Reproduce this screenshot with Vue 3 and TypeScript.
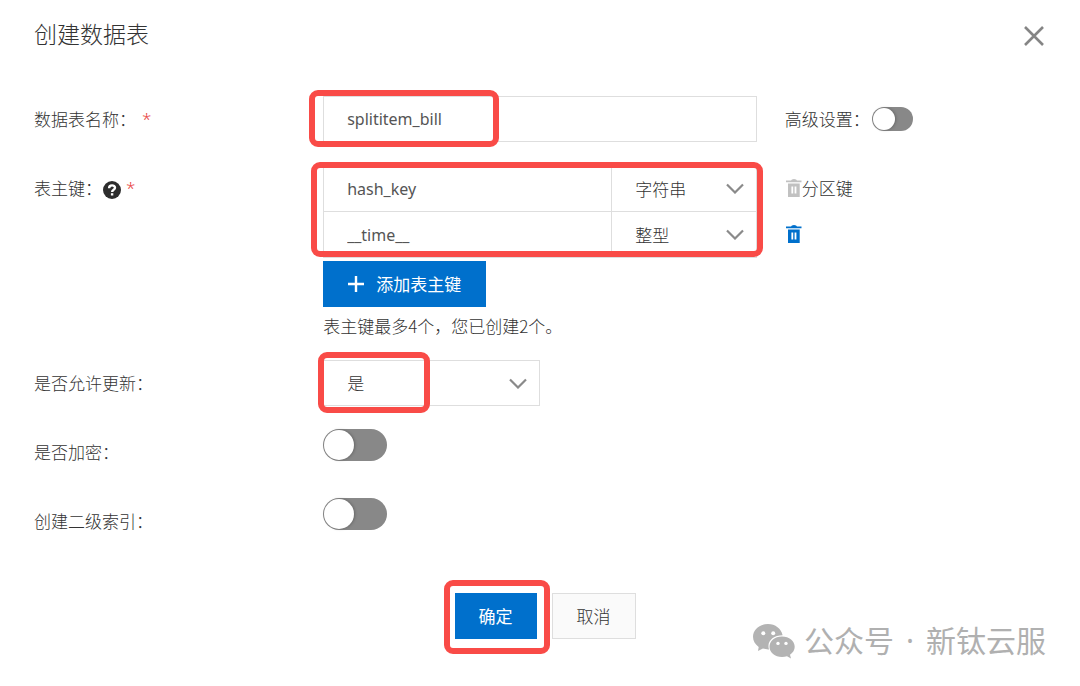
<script setup lang="ts">
import { ref } from 'vue'

interface KeyRow {
  name: string
  type: string
  locked: boolean
}

const tableName = ref('splititem_bill')
const keys = ref<KeyRow[]>([
  { name: 'hash_key', type: '字符串', locked: true },
  { name: '__time__', type: '整型', locked: false },
])
const allowUpdate = ref('是')
const advanced = ref(false)
const encrypted = ref(false)
const secondaryIndex = ref(false)

function addKey() {
  if (keys.value.length < 4) keys.value.push({ name: '', type: '字符串', locked: false })
}
function removeKey(index: number) {
  keys.value.splice(index, 1)
}
</script>

<template>
  <main class="dialog">
    <header class="header">
      <h1>创建数据表</h1>
      <button class="close" type="button" aria-label="关闭">
        <svg width="20" height="20" viewBox="0 0 20 20"><path d="M1 1L19 19M19 1L1 19" fill="none" stroke="#858585" stroke-width="2.6" /></svg>
      </button>
    </header>

    <form class="form" @submit.prevent>
      <div class="row">
        <label class="label" for="table-name">数据表名称：<span class="star spaced">*</span></label>
        <div class="control">
          <input id="table-name" v-model="tableName" class="box" type="text" />
          <span class="mark mark-name"></span>
        </div>
        <div class="aside">
          <label for="advanced">高级设置：</label>
          <input id="advanced" v-model="advanced" class="toggle small" type="checkbox" />
        </div>
      </div>

      <div class="row">
        <div class="label">
          <span>表主键：</span>
          <svg class="help" width="18" height="18" viewBox="0 0 18 18">
            <circle cx="9" cy="9" r="9" fill="#2d2d2d" />
            <path d="M6.100 7.200C6.100 3.500 12 3.600 12 6.800C12 8.900 9.100 8.600 9.100 11" fill="none" stroke="#fff" stroke-width="2.4" />
            <path d="M7.900 12.200h2.400v2.300H7.900z" fill="#fff" />
          </svg>
          <span class="star">*</span>
        </div>
        <div class="control keys">
          <div v-for="(key, i) in keys" :key="i" class="key">
            <input v-model="key.name" class="box" type="text" :aria-label="'主键名称' + (i + 1)" />
            <div class="select">
              <select v-model="key.type" class="box" :aria-label="'主键类型' + (i + 1)">
                <option>字符串</option>
                <option>整型</option>
              </select>
              <svg class="chevron" width="18" height="11" viewBox="0 0 18 11"><path d="M1 1.5L9 9.5L17 1.5" fill="none" stroke="#8a8a8a" stroke-width="2.2" /></svg>
            </div>
          </div>
          <span class="mark mark-keys"></span>
        </div>
        <div class="aside-list">
          <div v-for="(key, i) in keys" :key="i" class="aside">
            <button class="trash" type="button" :class="{ locked: key.locked }" :disabled="key.locked" aria-label="删除" @click="removeKey(i)">
              <svg width="16" height="18" viewBox="0 0 16 18">
                <path fill="currentColor" fill-rule="evenodd" d="M5 1.600Q5.400 0 8 0Q10.600 0 11 1.600H15.500V3.200H0V1.600ZM2 4.400H13.700V18H2ZM5.400 7.600V14.600H7.200V7.600ZM8.600 7.600V14.600H10.400V7.600Z" />
              </svg>
            </button>
            <span v-if="key.locked">分区键</span>
          </div>
        </div>
        <div class="control extra">
          <button class="btn primary add" type="button" @click="addKey">
            <svg width="16" height="16" viewBox="0 0 16 16"><path d="M8 0V16M0 8H16" stroke="#fff" stroke-width="2.4" /></svg>
            <span>添加表主键</span>
          </button>
          <p class="note">表主键最多4个，您已创建{{ keys.length }}个。</p>
        </div>
      </div>

      <div class="row">
        <label class="label" for="allow-update">是否允许更新：</label>
        <div class="control">
          <div class="select half">
            <select id="allow-update" v-model="allowUpdate" class="box">
              <option>是</option>
              <option>否</option>
            </select>
            <svg class="chevron" width="18" height="11" viewBox="0 0 18 11"><path d="M1 1.5L9 9.5L17 1.5" fill="none" stroke="#8a8a8a" stroke-width="2.2" /></svg>
          </div>
          <span class="mark mark-update"></span>
        </div>
      </div>

      <div class="row">
        <label class="label" for="encrypted">是否加密：</label>
        <div class="control"><input id="encrypted" v-model="encrypted" class="toggle" type="checkbox" /></div>
      </div>

      <div class="row">
        <label class="label" for="secondary">创建二级索引：</label>
        <div class="control"><input id="secondary" v-model="secondaryIndex" class="toggle" type="checkbox" /></div>
      </div>

      <footer class="footer">
        <div class="confirm">
          <button class="btn primary" type="submit">确定</button>
          <span class="mark mark-confirm"></span>
        </div>
        <button class="btn plain" type="button">取消</button>
      </footer>
    </form>

    <div class="watermark">
      <svg width="42" height="35" viewBox="0 0 42 35">
        <path fill="#b3b3b3" d="M15 0C6.500 0 0 5.600 0 12.800C0 17 2.200 20.500 5.700 22.900L5 27L9.900 24.600C12 25.200 14 25.500 16 25.400C13.500 17.500 20 11.200 29.600 11.200C28.300 4.700 22.300 0 15 0Z" />
        <path fill="#b3b3b3" d="M29 12.400C21.700 12.400 16.500 17 16.500 22.800C16.500 28.700 21.900 33 29 33C30.700 33 32.400 32.700 34 32.200L38 34.500L37 30.700C40 28.700 41.700 26 41.700 22.800C41.700 17 36.200 12.400 29 12.400Z" />
        <g fill="#fff"><circle cx="10.300" cy="9.200" r="2" /><circle cx="20.200" cy="9.200" r="2" /><circle cx="25" cy="19.400" r="1.700" /><circle cx="33" cy="19.400" r="1.700" /></g>
      </svg>
      <span class="account"><span>公众号</span><span>·</span><span>新钛云服</span></span>
    </div>
  </main>
</template>

<style>
body {
  background: #fff;
}
</style>

<style scoped>
* {
  box-sizing: border-box;
}
.dialog {
  position: relative;
  min-height: 100vh;
  padding: 12px 34px 0;
  color: #333;
  font: 300 17px/22px 'Noto Sans CJK SC', 'Noto Sans', sans-serif;
}
.header {
  display: flex;
  align-items: flex-start;
  justify-content: space-between;
  height: 46px;
}
h1 {
  margin: 0;
  font-size: 23px;
  font-weight: 300;
  line-height: 42px;
}
.close {
  display: flex;
  margin-right: 2px;
  padding: 14px 0 0;
  border: 0;
  background: none;
}
.form {
  display: flex;
  flex-direction: column;
  gap: 23px;
  padding-top: 38px;
}
.row {
  display: grid;
  grid-template-columns: 2fr 3fr 2fr;
}
.label {
  display: flex;
  align-items: center;
  height: 46px;
}
.star {
  margin-left: 5px;
  color: #e8433f;
  font-family: 'Noto Sans', sans-serif;
}
.star.spaced {
  margin-left: 6px;
}
.help {
  margin: 4px 0 0 1px;
}
.control {
  position: relative;
  min-width: 0;
}
.extra {
  grid-column: 2;
  padding-top: 4px;
}
.box {
  display: block;
  width: 100%;
  height: 47px;
  padding: 0 23px;
  border: 1px solid #dedede;
  border-radius: 0;
  background: #fff;
  color: #333;
  font: inherit;
  appearance: none;
  outline: none;
}
input.box {
  color: #555;
  font-family: 'Noto Sans', 'Noto Sans CJK SC', sans-serif;
  font-size: 16px;
  font-weight: 400;
}
.row > .control > .box,
.half .box {
  height: 46px;
}
.key {
  display: grid;
  grid-template-columns: 2fr 1fr;
  height: 46px;
}
.key .select {
  margin-left: -1px;
}
.select {
  position: relative;
}
.half {
  width: 50%;
}
.chevron {
  position: absolute;
  top: 18px;
  right: 13px;
  pointer-events: none;
}
.aside {
  display: flex;
  align-items: center;
  height: 46px;
  padding-left: 28px;
}
.trash {
  display: flex;
  margin-left: 1px;
  padding: 0;
  border: 0;
  background: none;
  color: #0070cc;
}
.trash.locked {
  color: #c1c1c1;
}
.toggle {
  display: block;
  width: 64px;
  height: 32px;
  margin: 0;
  padding: 1px;
  border-radius: 16px;
  background: #888;
  appearance: none;
}
.toggle::before {
  content: '';
  display: block;
  width: 30px;
  height: 30px;
  border-radius: 50%;
  background: #fff;
  box-shadow: 1px 0 3px rgba(0, 0, 0, 0.25);
}
.toggle:checked {
  background: #0070cc;
}
.toggle:checked::before {
  margin-left: auto;
}
.toggle.small {
  width: 41px;
  height: 24px;
  margin-left: 2px;
}
.toggle.small::before {
  width: 22px;
  height: 22px;
}
.btn {
  display: flex;
  align-items: center;
  height: 46px;
  padding: 0 24px;
  border: 0;
  font: inherit;
}
.primary {
  background: #0070cc;
  color: #fff;
  font-weight: 400;
}
.plain {
  border: 1px solid #dedede;
  background: #fafafa;
  color: #333;
}
.btn.add {
  gap: 12px;
  padding: 0 25px;
}
.note {
  margin: 0;
  padding-top: 8px;
}
.footer {
  display: flex;
  justify-content: center;
  gap: 15px;
  padding: 26px 0 0 10px;
}
.confirm {
  position: relative;
}
.mark {
  position: absolute;
  border: 6px solid #f94b47;
  border-radius: 9px;
  pointer-events: none;
}
.mark-name {
  top: -6px;
  left: -14px;
  width: 190px;
  height: 57px;
}
.mark-keys {
  inset: -3px -6px 0 -12px;
}
.mark-update {
  top: -8px;
  left: -5px;
  width: 112px;
  height: 61px;
}
.mark-confirm {
  inset: -13px -13px -15px -11px;
}
.watermark {
  position: absolute;
  right: 34px;
  bottom: 22px;
  display: flex;
  align-items: center;
  gap: 9px;
  color: #b0b0b0;
  font-size: 30px;
  font-weight: 400;
  line-height: 46px;
}
.account {
  display: flex;
  gap: 12px;
  font-family: 'Noto Sans', 'Noto Sans CJK SC', sans-serif;
}
</style>
